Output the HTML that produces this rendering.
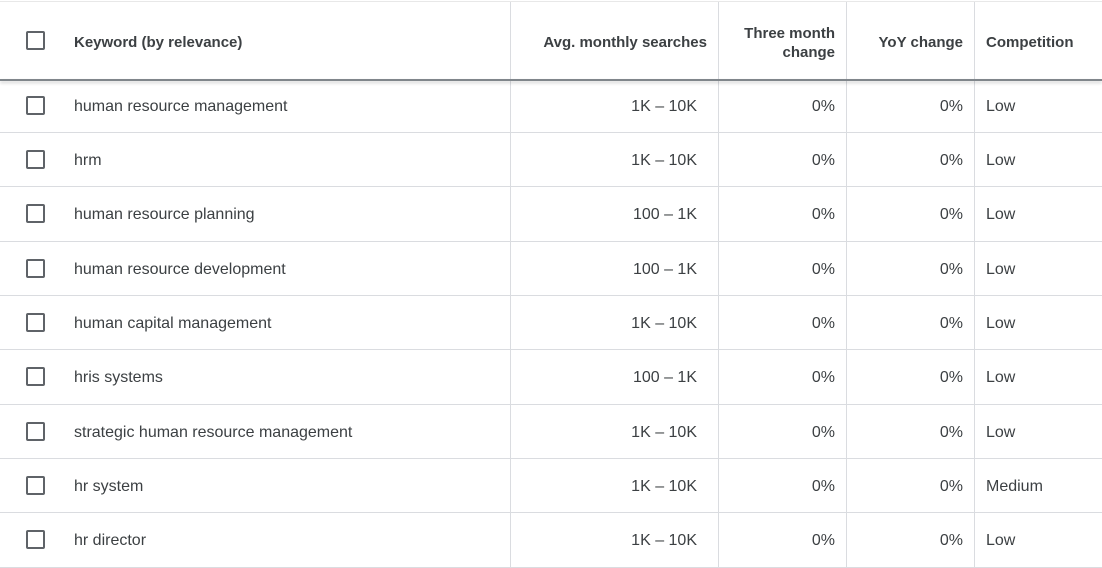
<!DOCTYPE html>
<html><head><meta charset="utf-8"><style>
html,body{margin:0;padding:0;background:#fff;width:1102px;height:568px;overflow:hidden;position:relative;font-family:"Liberation Sans",Arial,sans-serif;font-size:16px;color:#3c4043}
.t{position:absolute;white-space:nowrap;line-height:18px;margin-top:2px}
.r{text-align:right}
.cb{position:absolute;left:26px;width:15px;height:15px;border:2px solid #5f6368;border-radius:2px}
.hl{position:absolute;left:0;width:1102px;height:1px;background:#dadce0}
.vl{position:absolute;width:1px;background:#dadce0;top:2px;height:566px}
.h{font-weight:bold;color:#3c4043;font-size:15px}
</style></head><body>
<div class="hl" style="top:1px;background:#e8e8e8"></div>
<div class="vl" style="left:510px"></div>
<div class="vl" style="left:718px"></div>
<div class="vl" style="left:846px"></div>
<div class="vl" style="left:974px"></div>
<div style="position:absolute;left:0;top:79px;width:1102px;height:2px;background:#80868b;box-shadow:0 2px 3px rgba(0,0,0,.2)"></div>
<div class="cb" style="top:31px"></div>
<div class="t h" style="left:74px;top:32px">Keyword (by relevance)</div>
<div class="t h r" style="right:395px;top:32px">Avg. monthly searches</div>
<div class="t h r" style="right:267px;top:22px;line-height:19px">Three month<br>change</div>
<div class="t h r" style="right:139px;top:32px">YoY change</div>
<div class="t h" style="left:986px;top:32px">Competition</div>

<div class="hl" style="top:132px"></div><div class="hl" style="top:186px"></div><div class="hl" style="top:241px"></div><div class="hl" style="top:295px"></div><div class="hl" style="top:349px"></div><div class="hl" style="top:404px"></div><div class="hl" style="top:458px"></div><div class="hl" style="top:512px"></div><div class="hl" style="top:567px"></div>

<div class="cb" style="top:96px"></div><div class="t" style="left:74px;top:96px">human resource management</div><div class="t r" style="right:405px;top:96px">1K – 10K</div><div class="t r" style="right:267px;top:96px">0%</div><div class="t r" style="right:139px;top:96px">0%</div><div class="t" style="left:986px;top:96px">Low</div>
<div class="cb" style="top:150px"></div><div class="t" style="left:74px;top:150px">hrm</div><div class="t r" style="right:405px;top:150px">1K – 10K</div><div class="t r" style="right:267px;top:150px">0%</div><div class="t r" style="right:139px;top:150px">0%</div><div class="t" style="left:986px;top:150px">Low</div>
<div class="cb" style="top:204px"></div><div class="t" style="left:74px;top:204px">human resource planning</div><div class="t r" style="right:405px;top:204px">100 – 1K</div><div class="t r" style="right:267px;top:204px">0%</div><div class="t r" style="right:139px;top:204px">0%</div><div class="t" style="left:986px;top:204px">Low</div>
<div class="cb" style="top:259px"></div><div class="t" style="left:74px;top:259px">human resource development</div><div class="t r" style="right:405px;top:259px">100 – 1K</div><div class="t r" style="right:267px;top:259px">0%</div><div class="t r" style="right:139px;top:259px">0%</div><div class="t" style="left:986px;top:259px">Low</div>
<div class="cb" style="top:313px"></div><div class="t" style="left:74px;top:313px">human capital management</div><div class="t r" style="right:405px;top:313px">1K – 10K</div><div class="t r" style="right:267px;top:313px">0%</div><div class="t r" style="right:139px;top:313px">0%</div><div class="t" style="left:986px;top:313px">Low</div>
<div class="cb" style="top:367px"></div><div class="t" style="left:74px;top:367px">hris systems</div><div class="t r" style="right:405px;top:367px">100 – 1K</div><div class="t r" style="right:267px;top:367px">0%</div><div class="t r" style="right:139px;top:367px">0%</div><div class="t" style="left:986px;top:367px">Low</div>
<div class="cb" style="top:422px"></div><div class="t" style="left:74px;top:422px">strategic human resource management</div><div class="t r" style="right:405px;top:422px">1K – 10K</div><div class="t r" style="right:267px;top:422px">0%</div><div class="t r" style="right:139px;top:422px">0%</div><div class="t" style="left:986px;top:422px">Low</div>
<div class="cb" style="top:476px"></div><div class="t" style="left:74px;top:476px">hr system</div><div class="t r" style="right:405px;top:476px">1K – 10K</div><div class="t r" style="right:267px;top:476px">0%</div><div class="t r" style="right:139px;top:476px">0%</div><div class="t" style="left:986px;top:476px">Medium</div>
<div class="cb" style="top:530px"></div><div class="t" style="left:74px;top:530px">hr director</div><div class="t r" style="right:405px;top:530px">1K – 10K</div><div class="t r" style="right:267px;top:530px">0%</div><div class="t r" style="right:139px;top:530px">0%</div><div class="t" style="left:986px;top:530px">Low</div>
</body></html>
